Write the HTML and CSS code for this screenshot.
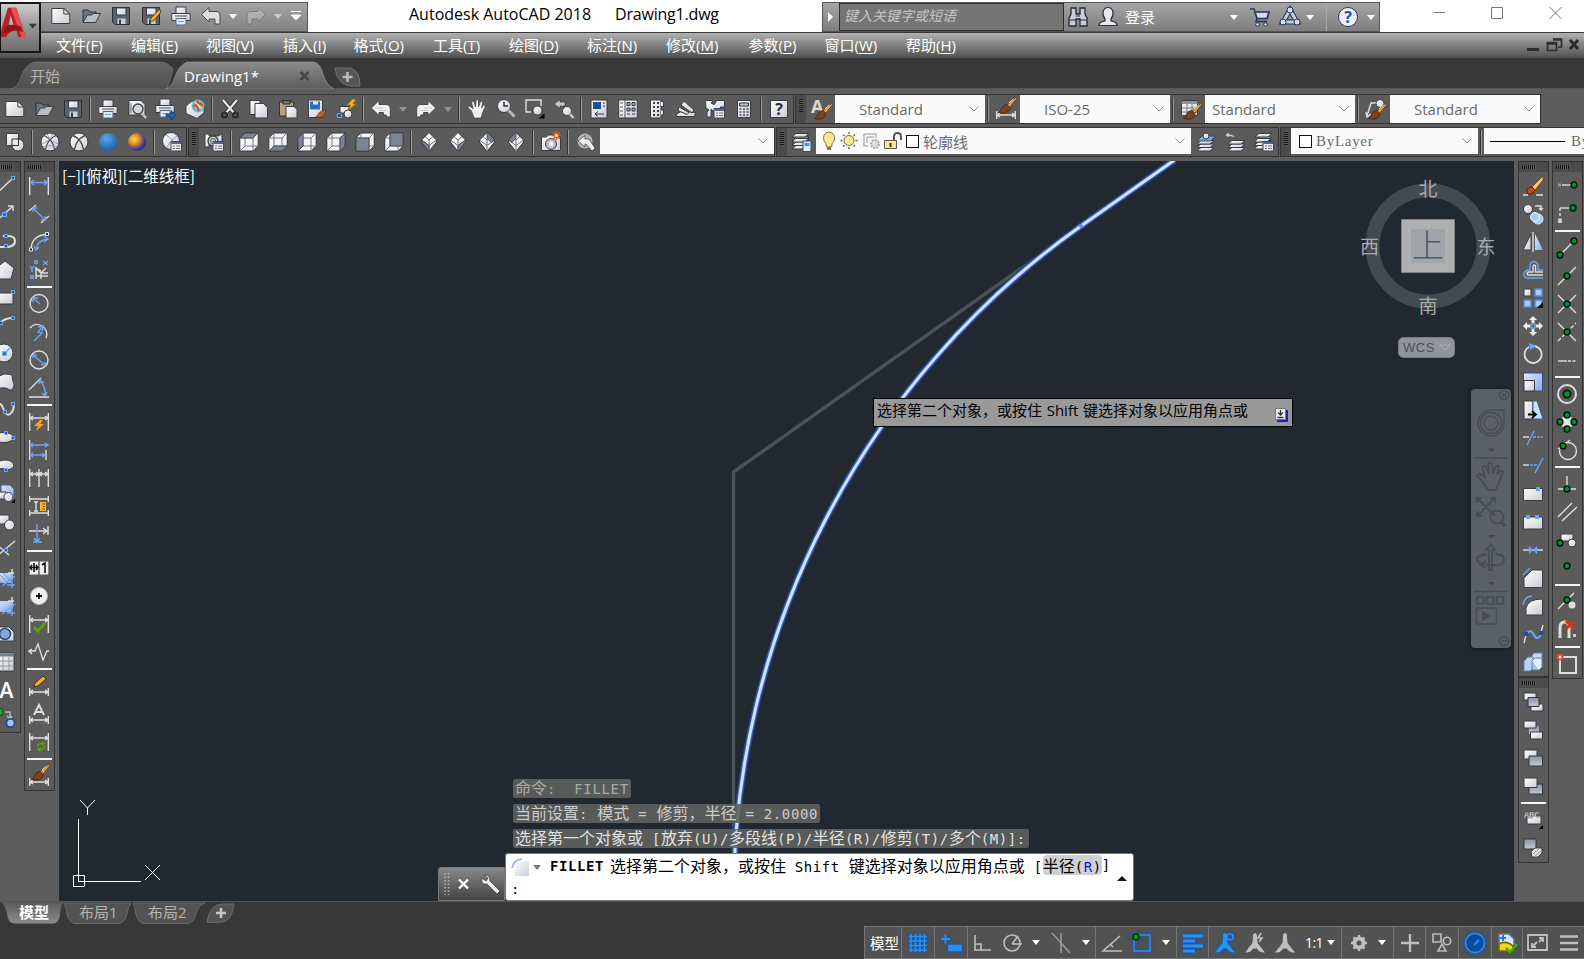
FILE: index.html
```html
<!DOCTYPE html>
<html lang="zh-CN">
<head>
<meta charset="utf-8">
<title>Autodesk AutoCAD 2018 - Drawing1.dwg</title>
<link rel="stylesheet" href="styles.css">
</head>
<body>
<svg class="defs" aria-hidden="true">
  <defs>
    <linearGradient id="g" x1="0" y1="0" x2="1" y2="1"><stop offset="0" stop-color="#fff"/><stop offset="1" stop-color="#c9ccd6"/></linearGradient>
    <linearGradient id="gb" x1="0" y1="0" x2="1" y2="1"><stop offset="0" stop-color="#dfeaff"/><stop offset="1" stop-color="#86a9e6"/></linearGradient>
    <linearGradient id="gd" x1="0" y1="0" x2="0" y2="1"><stop offset="0" stop-color="#8b92a0"/><stop offset="1" stop-color="#c4c9d2"/></linearGradient>
    <linearGradient id="tabOn" x1="0" y1="0" x2="0" y2="1"><stop offset="0" stop-color="#8a8a8a"/><stop offset="1" stop-color="#5d5d5d"/></linearGradient>
    <linearGradient id="tabOff" x1="0" y1="0" x2="0" y2="1"><stop offset="0" stop-color="#646464"/><stop offset="1" stop-color="#505050"/></linearGradient>
    <linearGradient id="layOn" x1="0" y1="0" x2="0" y2="1"><stop offset="0" stop-color="#5a5a5a"/><stop offset="1" stop-color="#8c8c8c"/></linearGradient>
    <radialGradient id="blueBall" cx=".4" cy=".3" r=".8"><stop offset="0" stop-color="#5aa4ea"/><stop offset="1" stop-color="#0f5aa8"/></radialGradient>
    <radialGradient id="sunBall" cx=".35" cy=".35" r=".8"><stop offset="0" stop-color="#ffe23c"/><stop offset=".35" stop-color="#e08a2a"/><stop offset=".7" stop-color="#433a98"/><stop offset="1" stop-color="#221c60"/></radialGradient>
  </defs>
  <symbol id="new" viewBox="0 0 20 20"><path class="f" d="M.8 2.500h12l6 5.500v9.500h-18z"/><path class="f" d="M12.800 2.500V8h6z"/></symbol>
  <symbol id="open" viewBox="0 0 20 20"><path class="k" d="M2 16V4h5l2 2h6v3"/><path class="f" d="M2 16.500L6.500 9h4l2-1.500h7L14.500 16.500z" style="fill:#b9bec6"/></symbol>
  <symbol id="save" viewBox="0 0 20 20"><path d="M1.500 1.500h17v17H4l-2.500-2.500z" fill="#5b626e" stroke="#2b2e33"/><path class="f" d="M5.500 2h9.500v7H5.500z"/><path d="M6.500 12.500h8V18h-8z" fill="#c9d2de"/><path d="M8 13.500h2V18H8z" fill="#3b414b"/></symbol>
  <symbol id="print" viewBox="0 0 20 20"><path class="f" d="M5 1h10V8H5z"/><path class="f" d="M.8 7.500h18.400v7H.8z"/><path d="M4 10h12" stroke="#464a50"/><path d="M5 12.500h10v6.500H5z" fill="#dceafd" stroke="#56677e"/><path d="M7 15.500h6" stroke="#63a2ec"/></symbol>
  <symbol id="undo" viewBox="0 0 20 20"><path d="M.5 8.500L8 1.500V5.500h7q4 0 4 4.500v8h-5v-5H8v3z" fill="#dedfe2" stroke="#4b4b4b"/></symbol>
  <symbol id="undobar" viewBox="0 0 20 20"><path d="M.3 9L8 1.500V5.500h7q4.300 0 4.300 4.500v8h-4v-2h-3v-2.500H8v3z" fill="#f0f0f0" stroke="#464646"/><path d="M4 9h8M8 11.500h8" stroke="#b9b9b9" stroke-width=".8"/></symbol>
  <symbol id="brush" viewBox="0 0 20 20"><path d="M19 1L10 9l2.500 2.500L19.500 3z" fill="#f0a238" stroke="#663c16" stroke-width=".8"/><path d="M16.500 3l-4.500 4" stroke="#fff0b0"/><path d="M10 8.500l3 3q-1 5-5 5.500-3 .5-6.500-.5 2.500-1 3-4 1.500-4 5.500-4z" fill="#7d4218" stroke="#45230e" stroke-width=".8"/></symbol>
  <symbol id="dim" viewBox="0 0 20 20"><path class="w" d="M.7 12v8M19.300 12v8M1 16h18M4 14l-3 2 3 2M16 14l3 2-3 2"/></symbol>
  <symbol id="dimtop" viewBox="0 0 20 20"><path class="w" d="M.7 1v18M19.300 1v18M1 6h18M4 4L1 6l3 2M16 4l3 2-3 2"/></symbol>
  <symbol id="mag" viewBox="0 0 20 20"><circle cx="10" cy="9" r="5" fill="#d3d6dc" stroke="#3b3f44" stroke-width="1.300"/><path d="M14 13.500l4 4.500" stroke="#c7c7c7" stroke-width="2.400"/></symbol>
  <symbol id="cube" viewBox="0 0 20 20"><path d="M.8 6l5-5h13.400v13l-5 5H.8z" fill="#f4f5f7" stroke="#35383d"/><path d="M1 6h13v13M14 6l5-5M6 1v13h13M6 14l-5 5" fill="none" stroke="#757a84"/></symbol>
  <symbol id="iso" viewBox="0 0 20 20"><path d="M10 .5L17.500 8v2L10 19.500 2.500 10V8z" fill="#f4f5f7" stroke="#35383d"/><path d="M2.500 8L10 13.500 17.500 8M10 13.500v6M6 4.500L10 8l4-3.500M10 8v5" fill="none" stroke="#6b7079"/></symbol>
  <symbol id="layers" viewBox="0 0 20 20"><path class="f" d="M1 17l4-3.500h13L14 17z"/><path class="f" d="M1 13.500L5 10h13l-4 3.500z"/><path class="f" d="M1 10l4-3.500h13L14 10z"/></symbol>
  <symbol id="list" viewBox="0 0 20 20"><path d="M9 9.500h10.500V19H9z" fill="#e7eaf0" stroke="#42484f"/><path d="M9.500 11H19" stroke="#53698c" stroke-width="2"/><path d="M11 14h2m1 0h4M11 16.500h2m1 0h4" stroke="#6e7480"/></symbol>
  <symbol id="dot" viewBox="0 0 8 8"><circle cx="4" cy="4" r="2.900" fill="#04922e" stroke="#081a0b" stroke-width="1.500"/></symbol>
  <symbol id="node" viewBox="0 0 4 4"><path d="M.5.5h3v3h-3z" fill="#30568f" stroke="#73adff"/></symbol>
  <symbol id="scaleman" viewBox="0 0 20 20"><path d="M10 0q2.500 1 2 3.500L12.500 10l7.500 9.500q-5 .5-7-2.500l-1-1.500H8L7 17q-2 3-7 2.500L7.500 10 8 3.500Q7.500 1 10 0z"/></symbol>
  <symbol id="chev" viewBox="0 0 10 6"><path d="M.5.5L5 5 9.500.5" fill="none" stroke="#8b8b8b"/></symbol>
</svg>

<header class="title">
  <div class="appbtn"><svg viewBox="0 0 40 50"><path d="M-3 35L6 4h9l10 31h-8l-2-7Q8 29 4 35z" fill="#bb2025"/><path d="M9 4h6l10 31-4 1z" fill="#e35350"/><path d="M3 24q9-3 17 0l2 6q-9-5-21 2z" fill="#8e1519"/><path d="M9 12l3 10H7z" fill="#b7b7b7"/><path d="M28 21h9l-4.500 5z" fill="#353b46"/></svg></div>
  <div class="quick">
    <svg class="i"><use href="#new"/></svg><svg class="i"><use href="#open"/></svg><svg class="i"><use href="#save"/></svg>
    <svg class="i"><use href="#save"/><path d="M18.500 3L10 12l-1 4 4-1.500L20 6z" fill="#f5a836" stroke="#62400f"/></svg>
    <svg class="i"><use href="#print"/></svg><svg class="i"><use href="#undo"/></svg><i class="car"></i>
    <svg class="i dim"><use href="#undo" transform="matrix(-1 0 0 1 20 0)"/></svg><i class="car pale"></i>
    <svg class="more"><path d="M0 1.500h10M0 5h10L5 10z" fill="#fff" stroke="#fff"/></svg>
  </div>
  <div class="caption"><span>Autodesk AutoCAD 2018</span><span class="file">Drawing1.dwg</span></div>
  <div class="info">
    <span class="expand"></span><span class="search">键入关键字或短语</span>
    <svg class="i"><path d="M3 1h5v6h4V1h5v6l2 4v8h-7v-7H8v7H1v-8l2-4z" fill="#c9ccd2" stroke="#252a38" stroke-width="1.300"/><path d="M1 13h7m4 0h7M8 9h4" stroke="#252a38"/></svg>
    <svg class="i"><path d="M1 18.500q0-3.500 6-4.500V12Q4.500 9 5 4.500 6.500.5 10 .5t5 4q.5 4.500-2 7.500v2q6 1 6 4.500z" fill="#e4e7ec" stroke="#262a33" stroke-width="1.200"/></svg>
    <span class="login">登录</span><i class="car"></i>
    <svg class="i"><path d="M0 2h4l3 9.500h10L19 5H6" fill="#d5dbe8" stroke="#27325b" stroke-width="1.700"/><path d="M7 11.500L6 14.500h11" fill="none" stroke="#27325b" stroke-width="1.500"/><circle cx="7.500" cy="17.500" r="1.800" class="hub"/><circle cx="15.500" cy="17.500" r="1.800" class="hub"/></svg>
    <svg class="i"><path d="M10 3L3 15h14z" fill="none" stroke="#27325b" stroke-width="5"/><path d="M10 3L3 15h14z" fill="none" stroke="#c6cde0" stroke-width="3"/><circle cx="10" cy="3" r="3" class="hub"/><circle cx="3" cy="15" r="3" class="hub"/><circle cx="17" cy="15" r="3" class="hub"/></svg>
    <i class="car"></i><span class="rule"></span>
    <span class="help">?</span><i class="car"></i>
  </div>
  <div class="winbtns"><svg><path d="M1 13.500h12M59.500 8.500h11v11h-11zM117.500 8l12 12m0-12l-12 12"/></svg></div>
</header>

<nav class="menu">
  <span>文件(<u>F</u>)</span><span>编辑(<u>E</u>)</span><span>视图(<u>V</u>)</span><span>插入(<u>I</u>)</span><span>格式(<u>O</u>)</span><span>工具(<u>T</u>)</span><span>绘图(<u>D</u>)</span><span>标注(<u>N</u>)</span><span>修改(<u>M</u>)</span><span>参数(<u>P</u>)</span><span>窗口(<u>W</u>)</span><span>帮助(<u>H</u>)</span>
  <svg class="mdi"><path d="M0 16.500h12" stroke-width="3"/><path d="M26 6h8.500v8H31M20.500 9.500h9v8h-9zM20 11h10M26 7h9" fill="none" stroke-width="1.700"/><path d="M43 7l8 9m0-9l-8 9" stroke-width="3"/></svg>
</nav>

<div class="tabs">
  <div class="tab start"><svg viewBox="0 0 165 28"><path d="M0 28Q8 27 11 16T24 1h127Q160 2 163 9L157 28z" fill="url(#tabOff)" stroke="#737373" stroke-width=".7"/></svg><span>开始</span></div>
  <div class="tab cur"><svg viewBox="0 0 170 28"><path d="M0 28Q7 27 10 16T22 1h127q6 1 9 12t11 15z" fill="url(#tabOn)" stroke="#909090" stroke-width=".7"/><path d="M135.500 11l8 8m0-8l-8 8" stroke="#454545" stroke-width="2.500"/></svg><span>Drawing1*</span></div>
  <svg class="plus"><path d="M1 1h15q10 2 10 18H16Q3 17 1 1z" fill="#555" stroke="#717171"/><path d="M8.500 10h10M13.500 5v10" stroke="#bdbdbd" stroke-width="2.400"/></svg>
</div>

<div class="bars">
  <div class="row">
    <div class="tb first">
      <svg class="i"><use href="#new"/></svg><svg class="i"><use href="#open"/></svg><svg class="i"><use href="#save"/></svg><b></b>
      <svg class="i"><use href="#print"/></svg>
      <svg class="i"><path class="f" d="M2 1.500h12l4 4V16H2z"/><path d="M4 4v10" stroke="#666"/><use href="#mag" x="1" y="1"/></svg>
      <svg class="i"><use href="#print" x="-1" y="-1"/><path d="M10 15h5v-3.500l5 5-5 4.500v-3.500h-5z" fill="#1e66bd" stroke="#0b2e60" stroke-width=".7"/></svg>
      <svg class="i"><path class="f" d="M1 7l6-5 12 4v8l-7 5.500-11-5z"/><circle cx="13" cy="7" r="6.500" fill="#60c4d8"/><path d="M8 8q6-7 10-1M13 1q-3 5 1 11" fill="none" stroke="#e6402e" stroke-width="1.800"/><path d="M10 3l7 7" stroke="#ffe04a" stroke-width="1.600"/></svg><b></b>
      <svg class="i"><path d="M3 1l11 13M17 1L6 14" stroke="#2c2c2c" stroke-width="4"/><path d="M3 1l11 13M17 1L6 14" stroke="#ececec" stroke-width="2.200"/><circle cx="4.500" cy="16" r="2.500" fill="none" stroke="#2b2b2b" stroke-width="2"/><circle cx="15.500" cy="16" r="2.500" fill="none" stroke="#2b2b2b" stroke-width="2"/></svg>
      <svg class="i"><path class="f" d="M1 1.500h10v14H1z"/><path class="f" d="M6 4.500h8.500l4 4v10.500H6z"/></svg>
      <svg class="i"><path d="M1.500 3h14v14h-14z" fill="#b89f7c" stroke="#373431"/><path d="M5 1.500h7V5H5z" fill="#777" stroke="#2b2b2b"/><path class="f" d="M8 7.500h8l3 3V19H8z"/></svg>
      <svg class="i"><path class="f" d="M1.500 1h14v17.500h-14z"/><path d="M3 2.500h10v8H3z" fill="#2f6ebb"/><path d="M6 2.500h5v3H6z" fill="#dce8f8"/><path d="M19 10l-6 3-4 5q7 2 9-3z" fill="#b5602a" stroke="#55290e" stroke-width=".6"/></svg>
      <svg class="i"><path d="M1.500 14.500h4v4h-4z" fill="#24568f" stroke="#6fa9f6"/><path class="f" d="M4 7.500h9V14H4z"/><circle class="f" cx="12" cy="15" r="4"/><path d="M17 0l-6 6h4l-3 5 8-6h-3.500l3-4z" fill="#ffb51f" stroke="#b26a05" stroke-width=".5"/></svg><b></b>
      <svg class="i"><use href="#undobar"/></svg><i class="car grey"></i><svg class="i"><use href="#undobar" transform="matrix(-1 0 0 1 20 0)"/></svg><i class="car grey"></i><b></b>
      <svg class="i"><path d="M4.500 12L1 8.500q1-2 3-.5l2 2L4.500 3q1.500-1.500 2.500 0l1.500 5L9 1.500q1.500-1.500 2.500 0V8l2-5.500q2-.8 2.200 1L14.500 9l2-3q2-.2 1.700 1.500L15.500 14 14 19H7z" fill="#f0f0f0" stroke="#414141" stroke-width=".7"/></svg>
      <svg class="i"><circle class="f" cx="8" cy="7" r="6.500"/><path d="M8 3v4h4" stroke="#333" fill="none" stroke-width="1.500"/><path d="M12.500 11.500l6 6" stroke="#b7b7b7" stroke-width="3"/></svg>
      <svg class="i"><path class="w" d="M6 13H1V1h15v6"/><circle class="f" cx="12.500" cy="11.500" r="4.500"/><path d="M19.500 14v5.500H14z" fill="#000"/></svg>
      <svg class="i"><path d="M0 5l6-4.500v2.500h5v4H6v2.500z" fill="#c9c9c9" stroke="#333" stroke-width=".7"/><circle class="f" cx="13" cy="12" r="4.500"/><path d="M16 15l3.500 4" stroke="#ccc" stroke-width="2.500"/></svg><b></b>
      <svg class="i"><path class="f" d="M2 1h16v18H2z"/><path d="M4 3h8v7H4z" fill="#1f4f93"/><path d="M14 4h2m-2 3h2M6 15h9m-6-2.500L6 15l3 2.500" fill="none" stroke="#333"/></svg>
      <svg class="i"><path class="f" d="M.7 1h18.600v18H.7z"/><path d="M7 1v18M2 4h3M2 8h3M2 12h3M2 16h3" stroke="#555"/><path d="M9 3.500h3v3H9zM14 3.500h3v3h-3zM9 9h3v3H9zM14 9h3v3h-3zM9 15h3m2 0h3" fill="#a8afba" stroke="#30343b"/></svg>
      <svg class="i"><path class="f" d="M3.500 1h10.500v18H3.500z"/><path d="M14 2.500h2.500v5H14M14 11h2.500v5H14" class="f"/><path d="M6 4h2m2 0h2M6 8h2m2 0h2M6 12h2m2 0h2M6 16h2m2 0h2" stroke="#3c4047" stroke-width="1.800"/></svg>
      <svg class="i"><path class="f" d="M.5 15l5-2.500 14 1-1 4H1z"/><path class="f" d="M8 2l10 9-2 3L5 6z"/><path class="f" d="M3 8l10 5.500-2 2-9-4z"/></svg>
      <svg class="i"><path class="f" d="M.5 1.500h7l-1 3 3 1 2-4h8V8h-4v4H8l-2-2v8H2v-5l2-2-3-2z"/><use href="#list"/></svg>
      <svg class="i"><path class="f" d="M3.500 1.500h13v17h-13z"/><path d="M5.500 4h9v3h-9z" fill="#b9c1cd" stroke="#333"/><path d="M5.500 10h9M5.500 13h9M5.500 16h9" stroke="#44484f" stroke-width="1.500" stroke-dasharray="2 1.500"/></svg><b></b>
      <svg class="i"><path class="f" d="M1.500 1.500h17v17h-17z"/><text x="10" y="16" class="q">?</text></svg>
    </div>
    <div class="tb">
      <em></em><svg class="i"><text x="0" y="14" class="bigA">A</text><use href="#brush" x="2" y="3"/></svg><div class="combo c150"><span class="t1">Standard</span><svg><use href="#chev"/></svg></div><b></b>
      <svg class="i"><use href="#dim"/><use href="#brush" x="1" y="-3"/></svg><div class="combo c150"><span class="t1">ISO-25</span><svg><use href="#chev"/></svg></div><b></b>
      <svg class="i"><path class="f" d="M.5 1.500h16v15H.5z"/><path d="M.5 3.500h16" stroke="#8a93a0" stroke-width="3"/><path d="M1 9h15M1 13h15M6 5v12M11 5v12" stroke="#777"/><use href="#brush" x="1" y="3"/></svg><div class="combo c150"><span class="t2">Standard</span><svg><use href="#chev"/></svg></div><b></b>
      <svg class="i"><path class="w" d="M1 17L5 4h7M0 13l1 5 4-3"/><circle class="f" cx="14" cy="4.500" r="4"/><use href="#brush" x="1" y="3"/></svg><div class="combo c150"><span class="t1">Standard</span><svg><use href="#chev"/></svg></div>
    </div>
  </div>
  <div class="row">
    <div class="tb first">
      <svg class="i"><path class="f" d="M1.500 1.500h12v12h-12z"/><circle class="f" cx="13" cy="13" r="6"/><path d="M7 7h6.500v6.500H7z" fill="#e8e9ec" stroke="#333"/></svg><b></b>
      <svg class="i"><circle class="f" cx="10" cy="10" r="9"/><path d="M4 3.500q9 4 10.500 14M16 3.500Q7 7.500 5.500 17.500" fill="none" stroke="#474c53" stroke-width="1.200"/><path d="M1.500 12Q10 9 13 2M18.500 12Q10 9 7 2M3 15q7-3 14 0" fill="none" stroke="#8b8f96" stroke-width=".8"/></svg>
      <svg class="i"><circle class="f" cx="10" cy="10" r="9"/><path d="M4 3.500q9 4 10.500 14M16 3.500Q7 7.500 5.500 17.500" fill="none" stroke="#474c53" stroke-width="1.400"/></svg>
      <svg class="i"><circle cx="10" cy="10" r="9" fill="url(#blueBall)"/></svg><svg class="i"><circle cx="10" cy="10" r="9" fill="url(#sunBall)"/></svg><b></b>
      <svg class="i"><circle class="f" cx="9" cy="9" r="8.500"/><path d="M4 3q7 3 9 13M15 4Q8 8 5 15" fill="none" stroke="#999"/><use href="#list"/></svg>
    </div>
    <div class="tb">
      <em></em><svg class="i"><path class="f" d="M1 2h4v2h9l4-2v8H5v5H1z"/><circle cx="9" cy="9" r="5" fill="#c9ccd2" stroke="#444" stroke-width="1.400"/><circle cx="9" cy="9" r="2.500" fill="none" stroke="#555"/><use href="#list"/></svg><b></b>
      <svg class="i"><use href="#cube"/><path class="d" d="M1 6l5-5h13l-5 5z"/></svg><svg class="i"><use href="#cube"/><path class="d" d="M1 19l5-5h13l-5 5z"/></svg><svg class="i"><use href="#cube"/><path class="d" d="M1 6l5-5v13l-5 5z"/></svg><svg class="i"><use href="#cube"/><path class="d" d="M14 6l5-5v13l-5 5z"/></svg><svg class="i"><use href="#cube"/><path class="d" d="M1 6h13v13H1z"/></svg><svg class="i"><use href="#cube"/><path class="d" d="M6 1h13v13H6z"/></svg><b></b>
      <svg class="i"><use href="#iso"/><path class="d" d="M2.500 8L10 13.500v6L2.500 10z"/></svg><svg class="i"><use href="#iso"/><path class="d" d="M17.500 8L10 13.500v6L17.500 10z"/></svg><svg class="i"><use href="#iso"/><path class="d" d="M10 .5L17.500 8l-3.500 2.500L10 6z"/></svg><svg class="i"><use href="#iso"/><path class="d" d="M10 .5L2.500 8 6 10.500 10 6z"/></svg><b></b>
      <svg class="i"><path class="f" d="M.5 5h5l2-2h5l2 2h5v13.500H.5z"/><circle cx="10" cy="12" r="5.500" fill="#b8bdc6" stroke="#444"/><circle cx="10" cy="12" r="2.500" fill="#f5f5f5"/><path d="M15.500-1v9M11 3.500h9M12.300.3l6.400 6.400m0-6.400l-6.400 6.400" stroke="#e8512b" stroke-width="1.500"/><circle cx="15.500" cy="3.500" r="1.800" fill="#ffd83c"/></svg><b></b>
      <svg class="i"><circle cx="9" cy="9" r="7.500" fill="#b2b4b7"/><path d="M2 9l7-5.500v3.500h4l6 9-3 3-6-7H9v3z" fill="#ececec" stroke="#4b4b4b" stroke-width=".8"/></svg>
      <div class="combo c174"><svg><use href="#chev"/></svg></div>
    </div>
    <div class="tb">
      <em></em><svg class="i"><use href="#layers" x="-1" y="-5"/><use href="#layers" x="-1"/><path d="M11 9h8v10.500h-8z" fill="#e4ecfa" stroke="#284d8a"/><path d="M12.500 11h5v3h-5z" fill="#4f8de0"/></svg>
      <div class="combo layer">
        <svg class="lamp"><path d="M6 17h4v3H6z" fill="#777"/><path d="M5.500 17q0-4-2.500-6Q1 3 8 2q7 1 5 9-2.500 2-2.500 6z" fill="#ffe88c" stroke="#7d7545"/><circle cx="28" cy="10.500" r="5" fill="#ffe88c" stroke="#777048"/><path d="M28 2v2m0 13v2m-8.500-8.500h2m13 0h2M22 4.500L23.500 6m9 9l1.500 1.500M34 4.500L32.500 6m-9 9L22 16.500" stroke="#70694a" stroke-width="1.400"/><path d="M43 4h12v4M43 4v12h4M46 7h7m-7 0v6" fill="none" stroke="#b5b5b5" stroke-width="1.600"/><circle cx="54" cy="14" r="4" fill="#ddd" stroke="#aaa" stroke-width="2" stroke-dasharray="2 1"/><path d="M73 11V7q0-4 3.500-4T80 7v3" fill="none" stroke="#555" stroke-width="2"/><path d="M63.500 10.500h12v8h-12z" fill="#ffe88c" stroke="#5c5c4d"/><path d="M69.500 13v4" stroke="#333" stroke-width="2"/></svg>
        <i class="sw"></i><span>轮廓线</span><svg><use href="#chev"/></svg>
      </div>
      <svg class="i"><use href="#layers" y="2"/><path d="M1 9l5-5h13l-4 5z" fill="#77a9e8" stroke="#2e4c78"/><circle class="f" cx="10" cy="4" r="3"/></svg>
      <svg class="i"><use href="#layers" x="2" y="2"/><path d="M0 3l4-3v2q5 0 6 4-3-2-6-1.500v1.500z" fill="#d0d0d0" stroke="#444" stroke-width=".5"/></svg>
      <svg class="i"><use href="#layers" y="-5"/><use href="#layers" x="-1" y="0"/><use href="#list"/></svg>
    </div>
    <div class="tb last">
      <em></em><div class="combo color"><i class="sw"></i><span>ByLayer</span><svg><use href="#chev"/></svg></div><b></b><div class="combo ltype"><i></i><span>ByLayer</span></div>
    </div>
  </div>
</div>

<main class="work">
  <aside class="col draw">
    <em></em>
    <svg class="i"><path class="w" d="M-2 19L15 3"/><use href="#node" x="14" y="0" width="4" height="4"/></svg>
    <svg class="i"><path class="w" d="M-2 18L15 3M11 2h5v5"/><use href="#node" x="5" y="8" width="5" height="5"/></svg>
    <svg class="i"><path class="w" d="M0 15h11q7-1 7-6t-7-5H6" style="stroke-width:2"/><use href="#node" x="7" y="2" width="4" height="4"/><use href="#node" x="7" y="12" width="4" height="4"/></svg>
    <svg class="i"><path class="f" d="M-1 8l9-7 9 7-3 11H1z"/></svg>
    <svg class="i"><path class="f" d="M-2 5h18v11H-2z"/><use href="#node" x="14" y="2" width="4" height="4"/></svg>
    <svg class="i"><path class="w" d="M0 10Q6 2 16 2" style="stroke-width:2"/><use href="#node" x="2" y="5" width="4" height="4"/><use href="#node" x="14" y="0" width="4" height="4"/></svg>
    <svg class="i"><circle class="f" cx="7" cy="9" r="9"/><path class="b" d="M8 9l5-5"/><use href="#node" x="5" y="7" width="5" height="5"/></svg>
    <svg class="i"><path class="f" d="M-2 3q5 2 9-1 6 0 8 1 0 5 2 9 0 6-4 6-4-3-9-2-5 1-6-4z"/></svg>
    <svg class="i"><path class="w" d="M0 5q4-3 6 3 4 10 8 5 4-4 2-9" style="stroke-width:2"/><use href="#node" x="6" y="10" width="4" height="4"/><use href="#node" x="14" y="2" width="4" height="4"/></svg>
    <svg class="i"><ellipse class="f" cx="7" cy="9.500" rx="9.500" ry="5"/><use href="#node" x="7" y="3" width="4" height="4"/><use href="#node" x="14" y="8" width="4" height="4"/></svg>
    <svg class="i"><path class="f" d="M-3 12Q0 4 8 4t9 6q-3 5-9 3z"/><use href="#node" x="7" y="12" width="4" height="4"/></svg>
    <svg class="i"><path d="M4 1h9l4 4v9H4z" fill="url(#gb)" stroke="#45658f"/><path class="f" d="M-2 8H9v7H-2z"/><circle class="f" cx="11.500" cy="13" r="4.500"/><path d="M18 15v4h-4z"/></svg>
    <svg class="i"><path class="f" d="M-2 3h14v9H-2z"/><circle class="f" cx="12.500" cy="13" r="5"/></svg>
    <svg class="i"><path class="w" d="M-1 4l13 11M-1 17L18 1"/><use href="#node" x="7" y="8" width="4" height="4"/></svg>
    <svg class="i"><path d="M-2 5h16v10H-2z" fill="url(#gb)"/><path d="M1 5l10 10M6 5l8 8M-2 8l7 7" stroke="#6e98dc"/><path class="w" d="M11 5h6M15 1v11"/><path class="b" d="M5 18L18 8M10 17h8M15 11v9"/></svg>
    <svg class="i"><path d="M-2 5h16v11H-2z" fill="url(#gb)"/><path class="w" d="M11 5h6M15 1v11"/><path class="b" d="M5 18L18 8M10 17h8M15 11v9"/></svg>
    <svg class="i"><path class="f" d="M-2 3h14l5 5v9H-2z"/><circle cx="8" cy="10" r="5.500" fill="#86a7d8" stroke="#2e4971" stroke-width="1.500"/></svg>
    <svg class="i"><path class="f" d="M-2 1h19v18H-2z"/><path d="M-2 3h19" stroke="#718092" stroke-width="3"/><path d="M0 9h17M0 14h17M6 5v14M12 5v14" stroke="#999"/></svg>
    <svg class="i"><text x="2.500" y="18" class="mtext">A</text></svg>
    <svg class="i"><circle cx="2" cy="4" r="4" fill="#3f9b31" stroke="#12440e"/><path class="w" d="M8 4h5v6m-3-2l3 3 2-3" style="stroke:#bbb"/><circle cx="13.500" cy="15" r="4" fill="#9ec7f5" stroke="#1e4a87" stroke-width="1.600"/></svg>
  </aside>

  <aside class="col dims">
    <em></em>
    <svg class="i"><path class="w" d="M.7 1v18M19.300 1v18"/><path class="b" d="M2 6.500h16M5 4L2 6.500 5 9m10-5l3 2.500L15 9"/></svg>
    <svg class="i"><path class="w" d="M0 7l7-6M12 19l8-7"/><path class="b" d="M4 4l12 12M4 8V4h4m8 8v4h-4"/></svg>
    <svg class="i"><path class="w" d="M2 18Q2 4 18 2"/><path class="b" d="M7 18Q8 8 19 7M5 14l2 4 3-3m5-11l4 3-4 3"/><path d="M.5 16h3v3h-3zM16.500.5h3v3h-3z" fill="#222" stroke="#eee"/></svg>
    <svg class="i"><path class="w" d="M7 19V8l5 5h7M7 16h12M12 13v6m5-11l-5 5M7 8l5 3"/><path class="b" d="M14 1l5 4m0-4l-5 4M1 6l2 3 2-3M3 9v3"/><circle class="b" cx="7" cy="2" r="1.500"/><circle class="b" cx="3" cy="17" r="1.500"/></svg><b></b>
    <svg class="i"><circle class="w" cx="10" cy="9.500" r="9"/><path class="b" d="M4 4l7 6M4 8V4h5"/></svg>
    <svg class="i"><path class="w" d="M1 6q5-6 12-2 7 5 4 12"/><path class="b" d="M5 19l8-8-4-1 5-6m-5 1l5-1-1 5"/></svg>
    <svg class="i"><circle class="w" cx="10" cy="10" r="9"/><path class="b" d="M4 5l12 10M4 8V5h4m8 7v3h-4"/></svg>
    <svg class="i"><path class="w" d="M0 12L12 0M0 19h20"/><path class="b" d="M11 3q6 6 5 15M10 6l1-4 4 3m-2 10l3 3 2-4"/></svg><b></b>
    <svg class="i"><use href="#dimtop"/><path d="M11 8l-6 6h4l-2 5 8-7h-4l3-4z" fill="#ffa313"/></svg>
    <svg class="i"><path class="w" d="M.7 0v20M17 10v10"/><path class="b" d="M1 5h18M4 3L1 5l3 2m12-4l3 2-3 2M1 15h15M4 13l-3 2 3 2m9-4l3 2-3 2"/></svg>
    <svg class="i"><path class="w" d="M.7 1v18M10 1v18M19.300 1v18M1 6h18M4 4L1 6l3 2m3-4l3 2 3-2M7 8l3-2 3 2m3-4l3 2-3 2"/></svg>
    <svg class="i"><path class="w" d="M.7 0v6M19.300 0v6M1 3h18M.7 14v6M19.300 14v6M1 17h18M7 6v9M5 6h4m-4 9h4"/><path d="M11 6h6v9h-6z" fill="#ffb52e"/><path d="M13 8h3m-2 2.500h2M13 13h3" stroke="#7d4b00"/></svg>
    <svg class="i"><path class="w" d="M0 7h18M19 2v9M14 4l4 3-4 3"/><path class="b" d="M8 0v18M4 18h9M5 14l3 4 3-4"/></svg><b></b>
    <svg class="i"><path d="M.7 3.500h8.600v13H.7z" fill="#eee"/><path d="M10.700 3.500h8.600v13h-8.600z" fill="#eee"/><path d="M5 5v9M1 9.500h8M3 7L1 9.500 3 12m4-5l2 2.500L7 12M13 7l3-2v10" fill="none" stroke="#111" stroke-width="1.600"/></svg>
    <svg class="i"><circle cx="10" cy="10" r="8.500" fill="#eee" stroke="#bbb"/><path d="M10 7v6M7 10h6" stroke="#111" stroke-width="1.800"/></svg>
    <svg class="i"><use href="#dimtop"/><path d="M5 13l4 4 7-8" fill="none" stroke="#52a600" stroke-width="3"/></svg>
    <svg class="i"><path class="w" d="M0 9h6l3-7 5 16 4-9h2M3 7L0 9l3 3"/></svg><b></b>
    <svg class="i"><use href="#dim"/><path d="M5 11l1-4 8-7 3 3-8 7z" fill="#f4aa35" stroke="#4e2b0c"/></svg>
    <svg class="i"><use href="#dim"/><path class="w" d="M5 11l5-10 5 10M7 8h6" style="stroke-width:2"/></svg>
    <svg class="i"><use href="#dimtop"/><path d="M8.500 15q0-3.500 4.500-3.500h2m-2-2l2.500 2-2.500 2m2.500 0q0 4-4 4h-2m2-2l-3 2 3 2" fill="none" stroke="#52a600" stroke-width="1.400"/></svg><b></b>
    <svg class="i"><use href="#dim"/><use href="#brush" x="1" y="-3"/></svg>
  </aside>

  <section class="canvas">
    <svg class="scene" viewBox="59 161 1455 740">
      <path d="M733.500 901V472L1081 226" fill="none" stroke="#4c5156" stroke-width="3.400"/>
      <path d="M733.500 901V898A823 823 0 0 1 1081 226L1174.500 160" fill="none" stroke="#203f80" stroke-width="7"/>
      <path d="M733.500 901V898A823 823 0 0 1 1081 226L1174.500 160" fill="none" stroke="#3b66bd" stroke-width="5"/>
      <path d="M733.500 901V898A823 823 0 0 1 1081 226L1174.500 160" fill="none" stroke="#d3e0ff" stroke-width="3"/>
      <circle cx="1081" cy="226" r="2" fill="#5c8ff2"/>
      <path d="M78.500 819v62.500H141M73.500 875.500h11v11h-11zM80 800l7.500 8 7.500-8M87.500 808v7M145 865l15 15m0-15l-15 15" fill="none" stroke="#fff"/>
      <circle cx="1428" cy="246" r="55.500" fill="none" stroke="#434a52" stroke-width="14"/>
      <path d="M1401.500 219.500h53v53h-53z" fill="#b0b0b1" stroke="#7f8484"/><path d="M1411 229h34v34h-34z" fill="#a0a5aa"/>
      <text x="1428" y="257" class="up">上</text>
      <g class="compass"><text x="1428" y="195.500">北</text><text x="1428" y="312.500">南</text><text x="1369.500" y="254">西</text><text x="1486" y="254">东</text></g>
      <rect x="1398.500" y="337.500" width="56" height="20" rx="5" fill="#9194a0" stroke="#777b86"/><text x="1403" y="352" class="wcs">WCS</text><path d="M1440 345h10l-5 5z" fill="#9194a0" stroke="#adb0bb"/>
    </svg>
    <div class="view">[−][俯视][二维线框]</div>
    <div class="tip"><span>选择第二个对象，或按住 Shift 键选择对象以应用角点或</span><svg><path d="M2 13h10V2" fill="none" stroke="#1d1dc4" stroke-width="2"/><path d="M.5.5h10v11H.5z" fill="#eee" stroke="#777"/><path d="M5.500 2v5M3 4.500l2.500 2.500L8 4.500M2.500 9.500h6" fill="none" stroke="#333" stroke-width="1.300"/></svg></div>
    <svg class="navbar" viewBox="0 0 40 259"><path d="M31 4l4 4m0-4l-4 4M3 69h34M3 202.500h34"/><circle cx="33" cy="6" r="4.500"/><path d="M20 21h13v13a13 13 0 1 1-13-13z"/><circle cx="20" cy="34" r="7"/><circle cx="20" cy="34" r="10.500"/><path class="s" d="M17 59.500h7l-3.500 3.500zM17 146h7l-3.500 3.500zM17 193h7l-3.500 3.500z"/><path d="M12 93l-6-6q1-3 5-1l3 2-3-10q2-2 4 0l3 7-1-10q3-2 4 0l1 10 3-8q3-1 3 1l-2 8 3-4q3-1 3 1l-4 10-3 8H17z" stroke-width="1.800"/><path d="M6 109l18 18M24 109L6 127M6 114v-5h5m8 0h5v5M6 122v5h5" stroke-width="2"/><circle cx="26" cy="128" r="6.500" stroke-width="2"/><path d="M30 133l4 4" stroke-width="3"/><path d="M18 181v-20h-3l5-6 4 6h-3v20zM15 165Q5 167 6 171t14 5 13-5-9-6M15 172l-5 4 5 3" stroke-width="1.800"/><path d="M5.500 208h7v7h-7zM15.500 208h7v7h-7zM25.500 208h7v7h-7zM5.500 219h20v16h-20z" stroke-width="1.700"/><path class="s" d="M11 222l9 5-9 5z"/><circle cx="33" cy="252" r="4.500"/><path d="M31 252h5"/></svg>
    <div class="hist"><p class="h1">命令<s>:  FILLET</s></p><p class="h2">当前设置<s>: </s>模式<s> = </s>修剪，半径<s> = 2.0000</s></p><p class="h3">选择第一个对象或<s> [</s>放弃<s>(U)/</s>多段线<s>(P)/</s>半径<s>(R)/</s>修剪<s>(T)/</s>多个<s>(M)]:</s></p></div>
    <div class="cmd">
      <div class="cmdgrip"><svg viewBox="0 0 68 34"><path d="M6 6v22M9.500 6v22" stroke="#bbb" stroke-width="1.500" stroke-dasharray="1.500 2"/><path d="M20 12.500l9 9m0-9l-9 9" stroke="#fff" stroke-width="2.300"/><path d="M45 8q6-1 6 6l10 10-3 3-10-10q-7 1-5-6l4 3 2-3z" fill="#e9e9e9" stroke="#333" stroke-width=".7"/></svg></div>
      <div class="cmdbox">
        <div class="line"><svg class="fil"><path d="M4 19V9q1-5 14-5v15z" fill="url(#g)"/><path d="M1.500 11Q2 3 11 2" fill="none" stroke="#9ebde5" stroke-width="2"/><path d="M22 8h8l-4 5z" fill="#777"/></svg><s class="bold">FILLET</s><span>选择第二个对象，或按住<s> Shift </s>键选择对象以应用角点或<s> [</s></span><span class="opt">半径<s>(<a>R</a>)</s></span><s>]</s></div>
        <div class="line"><s class="prompt">:</s></div><i class="uparr"></i>
      </div>
    </div>
  </section>

  <div class="right">
    <div class="stack">
      <aside class="col">
        <em></em>
        <svg class="i"><path class="w" d="M0 19h5m8 0h7"/><path d="M20 0L9 11l3 3 8-10z" fill="#ffc65a" stroke="#70420d" stroke-width=".8"/><path d="M9 11l3 3q-1 4-5 4-4 0-3-4 1-3 5-3z" fill="#c84815" stroke="#63200a"/></svg>
        <svg class="i"><circle class="f" cx="5" cy="5" r="4.500"/><path class="w" d="M12 2h6v4m-2-2l2 2 2-2"/><circle cx="15" cy="15" r="5" fill="#a9cdfb" stroke="#dcebff"/><circle cx="12" cy="13" r="4.500" fill="#a9cdfb" stroke="#f2f7ff"/></svg>
        <svg class="i"><path class="f" d="M8 2v16H0z"/><path d="M12 2v16h8z" fill="url(#gb)"/><path class="w" d="M10 0v20"/></svg>
        <svg class="i"><path class="b" d="M20 18H4q-4-1-3-5 1-3 6-3-1-9 4-8.500t4 8.500h5"/><path class="w" d="M20 15H5q-2-1 0-3h5V6q1-2 2.500 0v6H20"/></svg>
        <svg class="i"><path class="f" d="M1 1h7v7H1z"/><path d="M12 1h7v7h-7zM1 12h7v7H1zM12 12h7v7h-7z" fill="#a9cbfa" stroke="#5489d8" stroke-width="1.500"/><path d="M20 14v6h-6z"/></svg>
        <svg class="i"><path d="M10 0l4 4h-2.500v3h-3V4H6zM10 20l4-4h-2.500v-3h-3v3H6zM0 10l4-4v2.500h3v3H4V14zM20 10l-4-4v2.500h-3v3h3V14z" fill="#eee"/><path class="b" d="M8 8h4v4H8z"/></svg>
        <svg class="i"><path class="w" d="M11 2a8.500 8.500 0 1 1-5 1" style="stroke-width:1.800"/><path d="M6-1l7 3-6 4z" fill="#69a6f8"/></svg>
        <svg class="i"><path d="M.5 1h19v18H.5z" fill="url(#gb)" stroke="#29518e"/><path class="f" d="M1 8.500h10.500V19H1z"/></svg>
        <svg class="i"><path class="f" d="M1 1h9v18H1z"/><path d="M10 1h4l6 18H10z" fill="#c9e1ff" stroke="#355e94"/><path d="M5 14.500h8m-4-3.500l4 3.500L9 18" fill="none" stroke="#000" stroke-width="1.800"/></svg>
        <svg class="i"><path class="w" d="M0 9h6"/><path class="b" d="M4 17l7-14"/><path class="b" d="M10 9h10" stroke-dasharray="3 1"/></svg>
        <svg class="i"><path class="w" d="M0 9h6"/><path class="b" d="M12 17l8-15"/><path class="b" d="M7 9h7" stroke-dasharray="3 1"/></svg>
        <svg class="i"><path class="f" d="M.5 4.500h19v12H.5z"/><path d="M13 3h4v4h-4z" fill="#69a6f8"/></svg>
        <svg class="i"><path class="f" d="M.5 5h19v12H.5z"/><path d="M3 3h4v4H3zM12 3h4v4h-4z" fill="#69a6f8"/></svg>
        <svg class="i"><path class="w" d="M0 10h20"/><path d="M6 6l4 4 4-4v8l-4-4-4 4z" fill="#69a6f8"/></svg>
        <svg class="i"><path class="f" d="M1 19.500V10l8-8h10.500v17.500z"/><path class="b" d="M0 7l7-7"/></svg>
        <svg class="i"><path class="f" d="M3 19v-7q2-9 16.500-9v16z"/><path class="b" d="M0 9Q2 0 9 0"/></svg>
        <svg class="i"><path class="w" d="M1 19l2-8M20 1l-2 7"/><path class="b" d="M3 10q5-6 8 1t8-2" style="stroke-width:2"/><path d="M1 8h4v4H1zM16 7h4v4h-4z" fill="#204d9c"/></svg>
        <svg class="i"><path d="M8 5l3-4h8v11l-3 3H8z" fill="#c4dafb" stroke="#607fa9"/><path d="M1 9l4-4h5v11l-3 3H1z" fill="#b6d3fa" stroke="#607fa9"/><path d="M9 9h7v9H9z" fill="#a6c4f0" stroke="#607fa9"/><path d="M9 9l3-3h7v9l-3 3" fill="#e4eefc" stroke="#607fa9"/></svg>
      </aside>
      <aside class="col second">
        <em></em>
        <svg class="i"><path class="f" d="M1 1h12v7H1z"/><path class="f" d="M8 12h12v7H8z"/><path d="M5 5.500h11v9H5z" fill="url(#gd)" stroke="#303640"/></svg>
        <svg class="i"><path d="M6 6h10v8H6z" fill="url(#gd)"/><path class="f" d="M1 1h12v7H1z"/><path class="f" d="M7.500 12h12v7h-12z"/></svg>
        <svg class="i"><path class="f" d="M1 2h13v9H1z"/><path d="M6 8h13.500v10H6z" fill="url(#gd)" stroke="#303640"/></svg>
        <svg class="i"><path d="M6 8h13.500v10H6z" fill="url(#gd)" stroke="#303640"/><path class="f" d="M1 2h13v9.500H1z"/></svg><b></b>
        <svg class="i"><path class="f" d="M4 6h14v8H4z"/><text x="1" y="8" class="abc">ABC</text><path d="M20 15v4h-4z"/></svg>
        <svg class="i"><path d="M1 1h12v10H1z" fill="url(#gd)" stroke="#303640"/><path class="f" d="M8 14l4-4h7v5l-4 4H9z"/><path d="M10 16l6-5m-4 7l6-5" stroke="#999"/></svg>
      </aside>
    </div>
    <aside class="col snaps">
      <em></em>
      <svg class="i"><path class="w" d="M5 9h10"/><path d="M1 7.500h3v3H1z" fill="#999"/><use href="#dot" x="13" y="5" width="8" height="8"/></svg>
      <svg class="i"><path class="w" d="M3 17V4" stroke-dasharray="3 2"/><path class="w" d="M3 4h12"/><path d="M1 15h4v4H1z" fill="#ccc"/><use href="#dot" x="12" y="0" width="8" height="8"/></svg><b></b>
      <svg class="i"><path class="w" d="M3 17L17 3"/><use href="#dot" x="-1" y="13" width="8" height="8"/><use href="#dot" x="13" y="-1" width="8" height="8"/></svg>
      <svg class="i"><path class="w" d="M1 19L19 1"/><use href="#dot" x="6" y="6" width="8" height="8"/></svg>
      <svg class="i"><path class="w" d="M1 19L19 1M1 1l18 18"/><use href="#dot" x="6" y="6" width="8" height="8"/></svg>
      <svg class="i"><path class="w" d="M1 1l18 18"/><path class="w" d="M1 19L19 1" stroke-dasharray="4 2"/><use href="#dot" x="6" y="6" width="8" height="8"/></svg>
      <svg class="i"><path class="w" d="M1 11h9"/><path class="w" d="M11 11h9" stroke-dasharray="3 1.500"/></svg><b></b>
      <svg class="i"><circle class="w" cx="10" cy="10" r="9" style="stroke-width:2"/><use href="#dot" x="5" y="5" width="10" height="10"/></svg>
      <svg class="i"><circle class="f" cx="10" cy="10" r="7"/><use href="#dot" x="6" y="-1" width="8" height="8"/><use href="#dot" x="6" y="13" width="8" height="8"/><use href="#dot" x="-1" y="6" width="8" height="8"/><use href="#dot" x="13" y="6" width="8" height="8"/></svg>
      <svg class="i"><circle class="w" cx="11" cy="11" r="8.500"/><path class="w" d="M1 9L13 0"/><use href="#dot" x="2" y="2" width="8" height="8"/></svg><b></b>
      <svg class="i"><path class="w" d="M10 2v13M1 15h18"/><use href="#dot" x="6" y="11" width="8" height="8"/></svg>
      <svg class="i"><path class="w" d="M1 15L15 1M5 19L20 5"/></svg>
      <svg class="i"><path class="f" d="M4 4h12v7H4z"/><circle class="f" cx="15" cy="13" r="4"/><use href="#dot" x="-1" y="9" width="8" height="8"/></svg>
      <svg class="i"><use href="#dot" x="6" y="4" width="8" height="8"/></svg><b></b>
      <svg class="i"><path class="w" d="M1 17L17 1"/><use href="#dot" x="6" y="4" width="8" height="8"/><circle cx="15" cy="13" r="3.500" fill="#ddd"/></svg>
      <svg class="i"><path d="M3 18V8q0-6 4.500-6T12 8v10" fill="none" stroke="#ddd" stroke-width="3"/><path d="M9 1l8 8m0-8L9 9" stroke="#e32f12" stroke-width="3"/><path d="M16 14h3v3h-3z" fill="#ccc"/></svg><b></b>
      <svg class="i"><path class="w" d="M3 3h16v16H3z" style="stroke-width:2"/><circle cx="3" cy="3" r="2.500" fill="#fff" stroke="#ef3d23" stroke-width="2"/></svg>
    </aside>
  </div>
</main>

<footer>
  <div class="layouts">
    <div class="lt on"><svg viewBox="0 0 64 22"><path d="M0 0Q5 2 7 12q1 9 7 9.500h39q6 0 7-9 1-10 4-12.500z" fill="url(#layOn)"/></svg><span>模型</span></div>
    <div class="lt"><svg viewBox="0 0 69 22"><path d="M2 1q2 4 3 11 2 9 8 9.500h44q6-1 8-10 1-7 4-10.500z" fill="#535353" stroke="#696969"/></svg><span>布局1</span></div>
    <div class="lt"><svg viewBox="0 0 75 22"><path d="M2 1q2 4 3 11 2 9 8 9.500h44q6-1 8-10Q67 3 74 1z" fill="#535353" stroke="#696969"/></svg><span>布局2</span></div>
    <svg class="ladd"><path d="M1 19.500Q3 1 17 1h11q-2 18-14 18.500z" fill="#535353" stroke="#6a6a6a"/><path d="M10 10h10M15 5v10" stroke="#c4c4c4" stroke-width="2.600"/></svg>
  </div>
  <div class="status">
    <div class="cell s37">模型</div>
    <div class="cell s33"><svg class="i blue"><path d="M3 1v18M7.500 1v18M12 1v18M16.500 1v18M1 3.500h18M1 8h18M1 12.500h18M1 17h18" stroke-width="1.600"/></svg></div>
    <div class="cell s33"><svg class="i blue"><path d="M0 6h9M4.500 1.500v9" stroke-width="1.800"/><path d="M8 12.500h12v5H8z" class="fill"/></svg></div>
    <div class="cell s128"><svg class="i"><path d="M2 2v15h16M2 11h6v6"/></svg><svg class="i pol"><circle cx="9" cy="10" r="8"/><path d="M9 11l6-8M9 11h10"/></svg><i class="car"></i><svg class="i iso"><path d="M1 0l18 20M10 0v20" style="stroke:#999"/></svg><i class="car"></i></div>
    <div class="cell s80"><svg class="i"><path d="M18 3L1 18h19M8 11l3 3"/></svg><svg class="i blue"><path d="M2 2h16v16H2z"/><circle cx="4" cy="4" r="3" fill="#0a9b10" style="stroke:#043a08"/></svg><i class="car"></i></div>
    <div class="cell s32"><svg class="i blue"><path d="M0 3h20M0 8h12M0 13h20M0 18h12" style="stroke-width:3"/></svg></div>
    <div class="cell s133"><svg class="i bluef"><use href="#scaleman"/><circle cx="15" cy="4" r="3" fill="none" stroke="#2391ff" stroke-width="1.500"/></svg><svg class="i man"><use href="#scaleman"/><path d="M16 0l-3 5h4l-3 4" fill="none"/></svg><svg class="i man"><use href="#scaleman"/></svg><span class="scale">1:1</span><i class="car"></i></div>
    <div class="cell s52"><svg class="i"><circle cx="10" cy="10" r="4.500" stroke-width="4"/><path d="M10 2v3m0 10v3M2 10h3m10 0h3M4.500 4.500l2 2m7 7l2 2m0-11l-2 2m-7 7l-2 2" stroke-width="2.500"/></svg><i class="car"></i></div>
    <div class="cell s32"><svg class="i"><path d="M1 10h18M10 1v18" style="stroke-width:2.400"/></svg></div>
    <div class="cell s33"><svg class="i"><path d="M1 1h8v8H1zM6 18l4-7 4 7z"/><circle cx="15" cy="8" r="3.700"/></svg></div>
    <div class="cell s33"><svg class="i blue"><circle cx="10" cy="10" r="9.500" style="fill:#064c97"/><path d="M9 12l5-5" stroke-width="2"/></svg></div>
    <div class="cell s31"><svg class="i"><path d="M2 1h10l5 5v7H2z" style="fill:#dce6f4;stroke:#55779c"/><path d="M2 11q7-4 14 2v5H2z" style="fill:#f7d51d;stroke:#76650d"/><path d="M3 5h6M6 2v6" style="stroke:#2877c9;stroke-width:2"/><path d="M9 15l4 4 7-8" style="stroke:#3fb011;stroke-width:2.500"/></svg></div>
    <div class="cell grow"><svg class="i"><path d="M0 2h19v15H0zM4 14l5-5M4 10v4h4M15 5l-4 4m0-4h4v4" stroke-width="1.800"/></svg><svg class="i"><path d="M1 3.500h18M1 10h18M1 16.500h18" style="stroke-width:2.500"/></svg></div>
  </div>
</footer>
</body>
</html>
```
FILE: styles.css
```css
* { box-sizing: border-box; }
body {
  margin: 0; width: 1584px; height: 959px; overflow: hidden;
  display: flex; flex-direction: column; background: #5d5d5d;
  font-family: "Open Sans", "Noto Sans CJK SC", sans-serif; font-size: 15px;
}
svg { display: block; flex: none; }
.defs { position: absolute; width: 0; height: 0; }
.i { width: 20px; height: 20px; overflow: visible; }
.f { fill: url(#g); stroke: #393c42; stroke-width: 1; }
.k { fill: #6d7480; stroke: #2c3036; }
.d { fill: #7c8492; stroke: #3b3f46; stroke-width: .8; }
.w { fill: none; stroke: #dedede; stroke-width: 1.4; }
.b { fill: none; stroke: #69a6f8; stroke-width: 1.4; }
.hub { fill: #d8deed; stroke: #27325b; }
.car { width: 0; height: 0; flex: none; border: 4px solid transparent; border-top: 5px solid #fff; border-bottom: 0; }
.car.grey { border-top-color: #949494; margin: 0 4px; }
.car.pale { border-top-color: #ccc; }

/* title bar */
.title { position: relative; height: 32px; flex: none; display: flex; background: #fff; padding-left: 40px; }
.appbtn { position: absolute; z-index: 2; left: -1px; top: 2px; width: 42px; height: 51px; border: 2px solid #161616; background: linear-gradient(#cdcdcd, #949494 50%, #6d6d6d); }
.appbtn svg { width: 40px; height: 47px; }
.quick { width: 268px; margin-top: 2px; padding: 0 0 2px 10px; display: flex; align-items: center; border: 1px solid #555; background: linear-gradient(#a5a5a5, #828282); }
.quick .i { margin-right: 10px; }
.quick .car { margin: 0 9px 0 -2px; }
.quick .dim { opacity: .35; }
.more { width: 10px; height: 12px; }
.caption { width: 514px; padding: 3px 0 0 101px; display: flex; gap: 24px; font-size: 16px; line-height: 22px; color: #000; white-space: pre; }
.file { letter-spacing: -.2px; }
.info { width: 558px; margin-top: 2px; display: flex; align-items: center; border: 1px solid #555; background: linear-gradient(#a5a5a5, #7e7e7e); }
.expand { width: 16px; }
.expand::after { content: ""; display: block; margin-left: 5px; border: 5px solid transparent; border-left-color: #fff; border-right: 0; }
.search { width: 225px; height: 28px; border: 1px solid #2e2e2e; background: #757575; color: #c4c4c4; font-style: italic; font-size: 14px; line-height: 24px; padding-left: 4px; }
.info .i { margin: 0 0 0 10px; }
.info .search + .i { margin-left: 4px; }
.login { width: 105px; margin-left: 7px; color: #fff; line-height: 26px; }
.info .login + .car + .i { margin-left: 12px; }
.info > .i + .car { margin-left: 6px; }
.rule { width: 1px; height: 28px; margin: 0 11px 0 12px; background: #aaa; }
.help { width: 20px; height: 20px; border-radius: 50%; background: #eef2f8; border: 1px solid #2a3a66; color: #164fae; font: bold 16px/18px "Open Sans", sans-serif; text-align: center; margin-right: 9px; }
.winbtns { padding-left: 52px; }
.winbtns svg { width: 135px; height: 30px; fill: none; stroke: #777; margin-top: -1px; }

/* menu bar */
.menu { height: 26px; flex: none; padding-left: 56px; display: grid; grid-template-columns: 75px 75px 77px 70.500px 79.500px 76px 78px 79px 82.500px 76px 81.500px 617px 1fr; color: #fff; line-height: 25px; background: linear-gradient(#b1b1b1, #505050); border-top: 1px solid #383838; }
.menu u { text-underline-offset: 2px; }
.menu > span { white-space: nowrap; }
.mdi { width: 54px; height: 24px; stroke: #2c2c2c; margin-left: 4px; }

/* file tabs */
.tabs { height: 31px; flex: none; display: flex; padding: 3px 0 0 10px; background: #383838; border-bottom: 1px solid #555; }
.tab { position: relative; height: 28px; line-height: 30px; }
.tab svg { position: absolute; left: 0; top: 0; width: 170px; height: 28px; }
.tab span { position: relative; }
.start { width: 155px; padding-left: 20px; color: #b5b5b5; }
.tab.start svg { width: 165px; }
.cur { width: 170px; padding-left: 19px; color: #fff; }
.plus { width: 28px; height: 21px; margin: 6px 0 0 -1px; }

/* docked toolbars */
.bars { height: 72px; flex: none; padding-top: 5px; display: flex; flex-direction: column; gap: 3px; }
.row { display: flex; gap: 1px; height: 30px; }
.tb { display: flex; align-items: center; border: 1px solid #333; border-left: 0; background: #5b5b5b; height: 30px; flex: none; }
.tb > .i { margin: 0 4.500px; }
.tb > b { width: 2px; height: 24px; margin: 0 2px; background: linear-gradient(90deg, #333 50%, #999 50%); flex: none; }
.tb > em { width: 11px; height: 28px; flex: none; border-left: 1px solid #333; background: #4b4b4b; padding: 3px 3px 0 3px; }
.tb > em::after { content: ""; display: block; height: 14px; background: repeating-linear-gradient(0deg, #181818 0 1px, #5b5b5b 1px 2px); }
.combo { height: 28px; background: #fafafa; display: flex; align-items: center; color: #6a6a6a; position: relative; font-size: 15px; padding-right: 6px; }
.combo > svg:last-child { width: 10px; height: 6px; margin-left: auto; }
.row + .row .combo { height: 26px; align-self: flex-start; }
.c150 { width: 150px; }
.t1 { padding-left: 24px; }
.t2 { padding-left: 7px; }
.c174 { width: 174px; }
.layer { width: 375px; padding-left: 5px; }
.lamp { width: 84px; height: 22px; }
.sw { width: 13px; height: 13px; border: 1px solid #111; background: #fff; margin: 0 4px 0 1px; flex: none; }
.color { width: 187px; padding-left: 7px; }
.color span, .ltype span { font-family: "Liberation Serif", serif; font-size: 15px; letter-spacing: .7px; }
.last { flex: 1; }
.ltype { flex: 1; overflow: hidden; padding: 0 0 0 6px; }
.ltype i { width: 75px; height: 1px; background: #000; flex: none; margin-right: 6px; }
.q { font: bold 16px "Open Sans"; text-anchor: middle; fill: #2b2d32; }
.bigA { font: bold 18px "Open Sans"; fill: #d8d8d8; }
.mtext { font: 600 21px "Open Sans"; fill: #fff; }
.abc { font: bold 8.500px "Liberation Mono"; fill: #eee; stroke: #555; stroke-width: .3px; }

/* work area */
.work { height: 740px; flex: none; display: flex; align-items: flex-start; }
.col { border: 1px solid #333; background: #5b5b5b; width: 31px; display: flex; flex-direction: column; align-items: center; }
.col > em { width: 29px; height: 10px; background: #4b4b4b; padding: 3px 12px 3px 3px; }
.col > em::after { content: ""; display: block; height: 4px; background: repeating-linear-gradient(90deg, #181818 0 1px, #5b5b5b 1px 2px); }
.col > .i { margin: 4px 1px 4px 0; }
.col > b { width: 25px; height: 1.500px; margin: 2px 0 2.500px; background: #f4f4f4; }
.draw { width: 21px; border-left: 0; margin-right: 3px; overflow: hidden; }
.draw > .i { margin: 4px 0 4px -6px; }
.dims { margin-right: 4px; }
.right { display: flex; padding-left: 4px; gap: 3px; align-items: flex-start; }

.canvas { position: relative; width: 1455px; height: 740px; flex: none; background: #212830; overflow: hidden; }
.scene { width: 1455px; height: 740px; }
.compass text { font: 19px "Noto Sans CJK SC", sans-serif; fill: #a9aaab; text-anchor: middle; }
.up { font: 32px "Noto Sans CJK SC", sans-serif; font-weight: 300; fill: #4b5564; text-anchor: middle; }
.wcs { font: 13px "Liberation Sans", sans-serif; fill: #4d4e56; letter-spacing: .6px; }
.view { position: absolute; left: 3px; top: 3px; color: #fff; font: 15.500px/23px "Noto Sans CJK SC", sans-serif; white-space: nowrap; }
.tip { position: absolute; left: 814px; top: 237px; width: 420px; height: 29px; border: 1px solid #000; background: #999; color: #000; padding: 0 4px 0 3px; display: flex; justify-content: space-between; line-height: 23px; white-space: nowrap; word-spacing: .8px; }
.tip svg { width: 13px; height: 14px; margin-top: 9px; }
.navbar { position: absolute; left: 1412px; top: 228px; width: 40px; height: 259px; border-radius: 4px; background: #5b6065; box-shadow: 0 0 2px 2px #1b2127; fill: none; stroke: #484d52; stroke-width: 1.500; }
.navbar .s { fill: #44494e; stroke: none; }

.hist { position: absolute; left: 454px; top: 618px; display: flex; flex-direction: column; align-items: flex-start; gap: 6px; }
.hist p { margin: 0; height: 19px; line-height: 16px; padding: 0 3px 0 2px; border-radius: 2px; background: rgba(95, 95, 95, .9); color: #e2e2e2; white-space: pre; font-size: 16px; font-family: "Noto Sans CJK SC", sans-serif; }
.hist .h1 { width: 118px; color: #aaa; }
.hist .h2 { width: 307px; color: #ccc; }
.hist .h3 { width: 516px; }
s { text-decoration: none; font: 14px "DejaVu Sans Mono", monospace; letter-spacing: .55px; white-space: pre; }
.h1 s, .h2 s { letter-spacing: .65px; }
.cmd { position: absolute; left: 379px; top: 692px; display: flex; align-items: flex-end; }
.cmdgrip { width: 67px; height: 34px; border: 1px solid #777; border-radius: 3px 0 0 0; background: linear-gradient(#888, #444); }
.cmdgrip svg { width: 68px; height: 34px; margin-top: -1px; }
.cmdbox { position: relative; width: 629px; height: 48px; background: #fff; border: 1px solid #777; border-radius: 3px; padding: 0 4px 0 5px; }
.line { height: 23px; display: flex; align-items: center; font: 16px/20px "Noto Sans CJK SC", sans-serif; color: #000; white-space: pre; }
.line > * { margin-top: -1px; }
.line .fil { width: 39px; height: 20px; margin-top: 2px; }
.line .bold { font-weight: bold; margin: 1px 6px 0 0; }
.line .prompt { margin-top: 1px; }
.opt { background: #d0d0d0; border-radius: 4px; }
.opt a { color: #1010e8; }
.uparr { position: absolute; right: 6px; top: 22px; border: 5px solid transparent; border-bottom-color: #111; border-top: 0; }

/* footer */
footer { height: 58px; flex: none; background: #383838; border-top: 1px solid #555; display: flex; flex-direction: column; justify-content: space-between; }
.layouts { display: flex; height: 23px; }
.lt { position: relative; height: 22px; line-height: 20px; color: #b4b4b4; width: 69px; padding-left: 17px; font-size: 15px; }
.lt svg { position: absolute; left: 0; top: 0; width: 69px; height: 22px; }
.lt:nth-child(3) svg { width: 75px; }
.lt span { position: relative; }
.lt.on { width: 62px; padding-left: 19px; color: #fff; font-weight: bold; }
.lt.on svg { width: 64px; }
.ladd { width: 29px; height: 21px; margin: 1px 0 0 6px; }
.status { margin-left: 864px; height: 33px; display: flex; background: #525252; border: 1px solid #747474; border-right: 0; }
.cell { display: flex; align-items: center; justify-content: center; border-right: 1px solid #747474; color: #fff; flex: none; }
.cell .i { fill: none; stroke: #bfbfbf; stroke-width: 1.600; }
.cell .blue { stroke: #2391ff; filter: drop-shadow(0 0 2px #0a53b5); }
.cell .blue .fill { fill: #2391ff; }
.cell .bluef { fill: #2391ff; stroke: none; filter: drop-shadow(0 0 2px #0a53b5); }
.cell .man { fill: #bfbfbf; stroke: none; }
.cell .man path { stroke: #bfbfbf; }
.s37 { width: 37px; font-size: 14.500px; padding-left: 3px; }
.s33 { width: 33px; }
.s32 { width: 32px; }
.s31 { width: 31px; }
.s128 { width: 128px; justify-content: flex-start; padding-left: 5px; gap: 9.500px; }
.s128 .iso { margin: 0 1px 0 1.500px; }
.s80 { width: 81px; gap: 10px; }
.s133 { width: 133px; gap: 10px; }
.s133 .car { margin-left: -6px; }
.scale { font-size: 14px; letter-spacing: -.5px; }
.s52 { width: 52px; gap: 9px; }
.grow { flex: 1; gap: 11px; border-right: 0; }
```
